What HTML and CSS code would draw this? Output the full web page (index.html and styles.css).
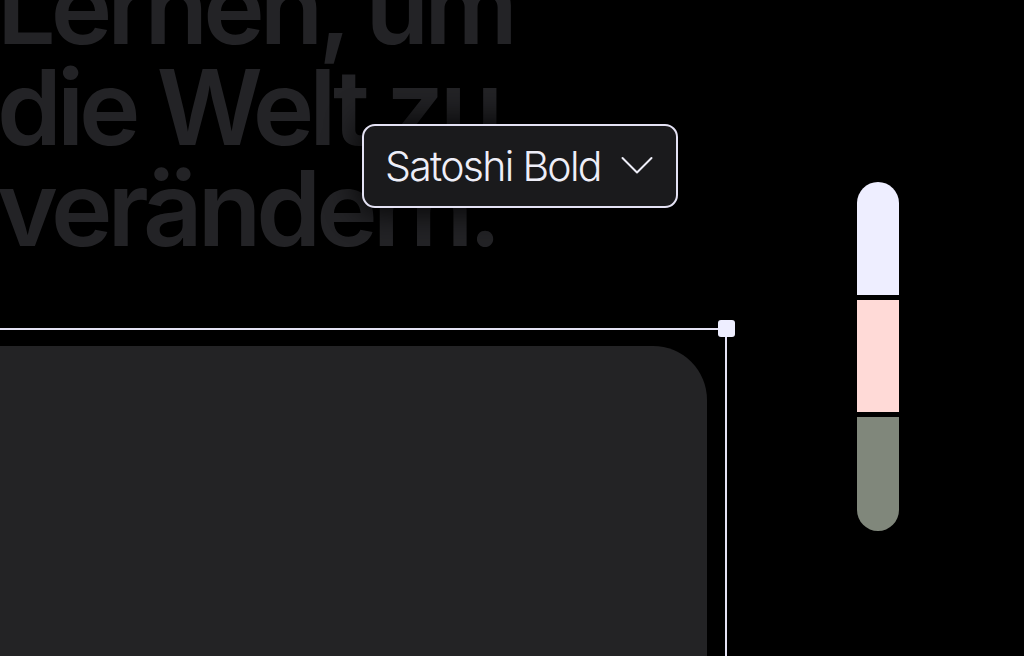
FILE: index.html
```html
<!DOCTYPE html>
<html lang="de">
<head>
<meta charset="utf-8">
<title>Typeface editor</title>
<link rel="stylesheet" href="styles.css">
</head>
<body>
<div class="stage">
  <div class="left">
    <h1 class="headline">Lernen, um<br>die Welt zu<br>verändern.</h1>
    <div class="frame">
      <span class="handle"></span>
      <div class="card"></div>
    </div>
  </div>
  <div class="right">
    <div class="swatches">
      <div class="swatch swatch-lavender"></div>
      <div class="swatch swatch-blush"></div>
      <div class="swatch swatch-sage"></div>
    </div>
  </div>
  <div class="font-select">
    <span class="font-name">Satoshi Bold</span>
    <svg class="chevron" width="32" height="20" viewBox="0 0 32 20" fill="none">
      <path d="M1.5 2 L16 16.5 L30.5 2" stroke="#EEEEF8" stroke-width="2" stroke-linecap="round" stroke-linejoin="round"/>
    </svg>
  </div>
</div>
</body>
</html>
```
FILE: styles.css
```css
html, body {
  margin: 0;
  padding: 0;
  background: #000;
}
body {
  width: 1024px;
  height: 656px;
  overflow: hidden;
  font-family: "Inter", "Liberation Sans", sans-serif;
}
.stage {
  position: relative;
  display: flex;
  height: 656px;
}
.left {
  width: 727px;
  display: flex;
  flex-direction: column;
}
.headline {
  margin: -44px 0 0 -3px;
  font-size: 104px;
  line-height: 101px;
  font-weight: 600;
  letter-spacing: -5px;
  color: #232326;
  white-space: nowrap;
}
.frame {
  position: relative;
  margin-top: 69px;
  flex: 1;
  display: flex;
  flex-direction: column;
  border-top: 2px solid #E4E2F4;
  border-right: 2px solid #E4E2F4;
  padding: 16px 18px 0 0;
}
.handle {
  position: absolute;
  top: -10px;
  right: -10px;
  width: 17px;
  height: 17px;
  border-radius: 3px;
  background: #EEEEFF;
}
.card {
  flex: 1;
  background: #232325;
  border-top-right-radius: 54px;
}
.right {
  padding: 182px 0 0 130px;
}
.swatches {
  width: 42px;
  display: flex;
  flex-direction: column;
  gap: 5px;
}
.swatch {
  height: 113px;
}
.swatch-lavender {
  background: #EEEEFF;
  border-radius: 21px 21px 0 0;
}
.swatch-blush {
  background: #FFDAD7;
  height: 112px;
}
.swatch-sage {
  background: #80877B;
  height: 114px;
  border-radius: 0 0 21px 21px;
}
.font-select {
  position: absolute;
  left: 362px;
  top: 124px;
  width: 316px;
  height: 84px;
  box-sizing: border-box;
  border: 2px solid #E4E2F4;
  border-radius: 13px;
  background: #1A1A1C;
  box-shadow: 0 0 30px 6px rgba(0, 0, 0, 0.8);
  display: flex;
  align-items: center;
  padding-left: 21px;
  gap: 20px;
}
.font-name {
  font-size: 41px;
  font-weight: 300;
  color: #EEEEF8;
  letter-spacing: -1.7px;
}
.chevron {
  display: block;
}
```
